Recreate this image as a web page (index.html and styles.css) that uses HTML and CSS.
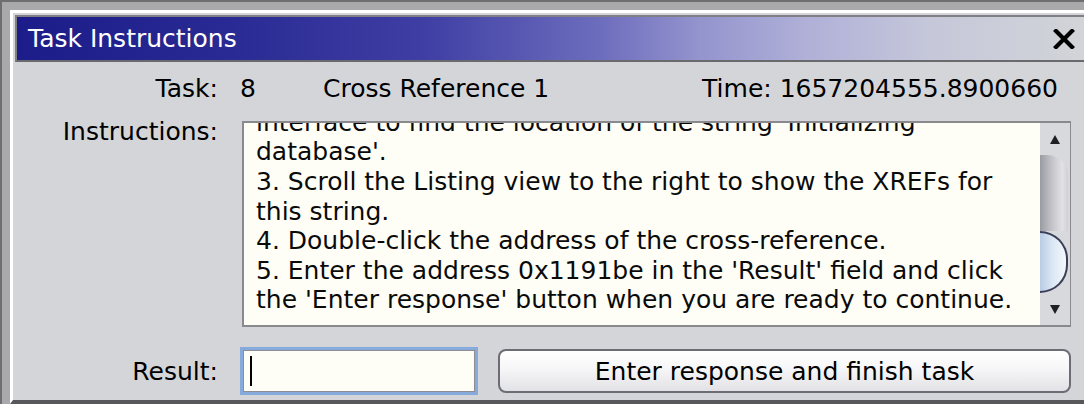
FILE: index.html
```html
<!DOCTYPE html>
<html>
<head>
<meta charset="utf-8">
<title>Task Instructions</title>
<link rel="stylesheet" href="styles.css">
</head>
<body>
<div class="desk">
  <div class="window">
    <div class="titlewrap">
      <div class="titlebar">
        <span class="title">Task Instructions</span>
        <svg class="close" width="22" height="20" viewBox="0 0 22 20">
          <path d="M3 2 L19 18 M19 2 L3 18" stroke="#000" stroke-width="4.2" stroke-linecap="square"/>
        </svg>
      </div>
    </div>
    <div class="content">
      <div class="label">Task:</div>
      <div class="info">
        <span class="num">8</span>
        <span class="name">Cross Reference 1</span>
        <span class="time">Time: 1657204555.8900660</span>
      </div>

      <div class="label label-top">Instructions:</div>
      <div class="textbox">
        <div class="text">
          <div class="line">interface to find the location of the string 'Initializing</div>
          <div class="line">database'.</div>
          <div class="line">3. Scroll the Listing view to the right to show the XREFs for</div>
          <div class="line">this string.</div>
          <div class="line">4. Double-click the address of the cross-reference.</div>
          <div class="line">5. Enter the address 0x1191be in the 'Result' field and click</div>
          <div class="line">the 'Enter response' button when you are ready to continue.</div>
        </div>
        <div class="scrollbar">
          <div class="arrow"><span class="tri-up"></span></div>
          <div class="track">
            <div class="trough"></div>
            <div class="thumb"></div>
          </div>
          <div class="arrow"><span class="tri-down"></span></div>
        </div>
      </div>

      <div class="label label-mid">Result:</div>
      <div class="result">
        <div class="input"><span class="caret"></span></div>
        <div class="button">Enter response and finish task</div>
      </div>
    </div>
  </div>
</div>
</body>
</html>
```

FILE: styles.css
```css
html, body {
  margin: 0;
  padding: 0;
  width: 1084px;
  height: 404px;
  overflow: hidden;
}
body {
  font-family: "DejaVu Sans", "Liberation Sans", sans-serif;
  font-size: 25px;
  color: #000;
}
.desk {
  box-sizing: border-box;
  width: 1084px;
  height: 404px;
  background: #a9a9ac;
  border-top: 2px solid #6e6e70;
  border-left: 2px solid #6e6e70;
  padding: 8px 0 0 8px;
}
.window {
  box-sizing: border-box;
  height: 394px;
  background: #d4d5d9;
  border-left: 3px solid #ffffff;
  border-top: 3px solid #ffffff;
  border-bottom: 4px solid #58585a;
  display: flex;
  flex-direction: column;
}
.titlewrap {
  padding: 2px 0 0 2px;
}
.titlebar {
  height: 43px;
  border-left: 2px solid #808084;
  border-top: 2px solid #808084;
  border-bottom: 2px solid #6a6a6e;
  background: linear-gradient(90deg, #1c1c8a 0%, #2a2a94 20%, #3e3ea4 38%, #6e6ebe 55%, #9494ce 64%, #b0b0d8 74%, #c6c8da 86%, #d2d4d8 100%);
  display: flex;
  align-items: center;
  padding: 0 9px 0 11px;
}
.title {
  color: #ffffff;
  flex: 1;
}
.close {
  display: block;
}
.content {
  flex: 1;
  display: grid;
  grid-template-columns: 205px 1fr;
  grid-template-rows: 29px 208px 48px;
  column-gap: 22px;
  row-gap: 18px;
  padding: 12px 13px 0 0;
}
.label {
  text-align: right;
  line-height: 29px;
  white-space: nowrap;
}
.label-top {
  margin-top: -4px;
}
.label-mid {
  align-self: center;
  margin-top: 1px;
}
.info {
  display: flex;
  line-height: 29px;
  white-space: nowrap;
}
.num {
  width: 83px;
}
.time {
  margin-left: auto;
  padding-right: 13px;
}
.textbox {
  height: 206px;
  box-sizing: border-box;
  margin-left: 2px;
  display: flex;
  border: 2px solid #8a8a8e;
  border-right-width: 1px;
  background: #fefef6;
}
.text {
  flex: 1;
  overflow: hidden;
  display: flex;
  flex-direction: column;
  justify-content: flex-end;
  padding: 0 12px 10px 12px;
  line-height: 29.6px;
  white-space: nowrap;
  color: #0a0a0a;
}
.scrollbar {
  width: 30px;
  background: #d8d9dd;
  display: flex;
  flex-direction: column;
}
.arrow {
  height: 32px;
  display: flex;
  align-items: center;
  justify-content: center;
}
.tri-up, .tri-down {
  width: 0;
  height: 0;
  border-left: 5px solid transparent;
  border-right: 5px solid transparent;
}
.tri-up {
  border-bottom: 9px solid #202024;
}
.tri-down {
  border-top: 9px solid #202024;
}
.track {
  flex: 1;
  display: flex;
  flex-direction: column;
}
.trough {
  flex: 1;
  margin-right: 2px;
  border-top-right-radius: 22px 18px;
  background: linear-gradient(90deg, #9a9aa2 0%, #bdbdc3 35%, #e2e2e6 80%, #cfcfd4 100%);
}
.thumb {
  height: 58px;
  margin-right: 2px;
  border: 2px solid #3a3e56;
  border-left: none;
  border-radius: 0 30px 30px 0 / 0 30px 30px 0;
  background: linear-gradient(90deg, #b8cce4 0%, #dce8f4 50%, #f4f8fc 100%);
}
.result {
  display: flex;
  align-items: center;
  gap: 20px;
}
.input {
  box-sizing: border-box;
  width: 238px;
  height: 48px;
  border: 3px solid #86aadc;
  box-shadow: inset 0 0 0 1px #8c8e94;
  background: #fefef6;
  display: flex;
  align-items: center;
  padding-left: 7px;
}
.caret {
  width: 2px;
  height: 30px;
  background: #000;
}
.button {
  flex: 1;
  box-sizing: border-box;
  height: 44px;
  border: 2px solid #6c6c74;
  border-radius: 8px;
  background: linear-gradient(180deg, #ffffff 0%, #f6f6f8 45%, #e2e2e6 100%);
  display: flex;
  align-items: center;
  justify-content: center;
  white-space: nowrap;
}
```
